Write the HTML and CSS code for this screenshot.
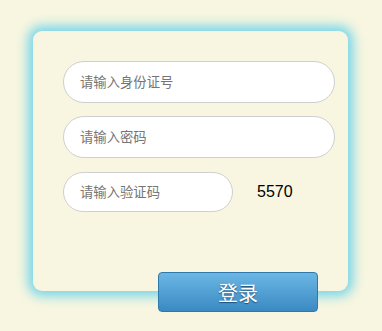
FILE: index.html
```html
<!DOCTYPE html>
<html lang="zh">
<head>
<meta charset="utf-8">
<link rel="stylesheet" href="styles.css">
</head>
<body>
<div class="card">
  <div class="form">
    <div class="field"><input class="input" type="text" placeholder="请输入身份证号"></div>
    <div class="field"><input class="input" type="password" placeholder="请输入密码"></div>
    <div class="field code-row">
      <input class="input short" type="text" placeholder="请输入验证码">
      <span class="code">5570</span>
    </div>
  </div>
  <button class="login">登录</button>
</div>
</body>
</html>
```

FILE: styles.css
```css
html, body {
  margin: 0;
  padding: 0;
  background: #f8f6e0;
}
html {
  min-height: 100%;
}
body {
  box-sizing: border-box;
  min-height: 100vh;
  padding: 31px 0 40px 33px;
  font-family: "Liberation Sans", Arial, "Noto Sans CJK SC", sans-serif;
}
.card {
  box-sizing: border-box;
  width: 315px;
  height: 260px;
  background: #f8f6e0;
  border-radius: 9px;
  box-shadow: 0 0 12px 5px #74d5ea;
  padding: 30px 13px 0 30px;
}
.form {
  display: flex;
  flex-direction: column;
  gap: 13px;
}
.field {
  display: flex;
  align-items: center;
}
.code-row {
  margin-top: 1px;
}
.input {
  box-sizing: border-box;
  width: 272px;
  height: 42px;
  border: 1px solid #cfcfcf;
  border-radius: 21px;
  background: #fff;
  padding: 0 16px;
  font-family: "Liberation Sans", Arial, "Noto Sans CJK SC", sans-serif;
  font-size: 13.333px;
  color: #333;
  outline: none;
}
.input::placeholder {
  color: #757575;
}
.input.short {
  width: 170px;
  height: 40px;
  border-radius: 20px;
}
.code {
  margin-left: 24px;
  font-size: 16px;
  color: #000;
}
.login {
  display: block;
  box-sizing: border-box;
  margin: 60px 0 0 95px;
  width: 160px;
  height: 40px;
  border: 1px solid #2f78ab;
  border-radius: 4px;
  background: linear-gradient(#6bb6e4, #3a8ac3);
  color: #fff;
  font-family: "Noto Sans CJK SC", sans-serif;
  font-size: 20px;
  text-shadow: 0 1px 1px #1d4f7a;
  padding: 0;
  cursor: pointer;
}
```
